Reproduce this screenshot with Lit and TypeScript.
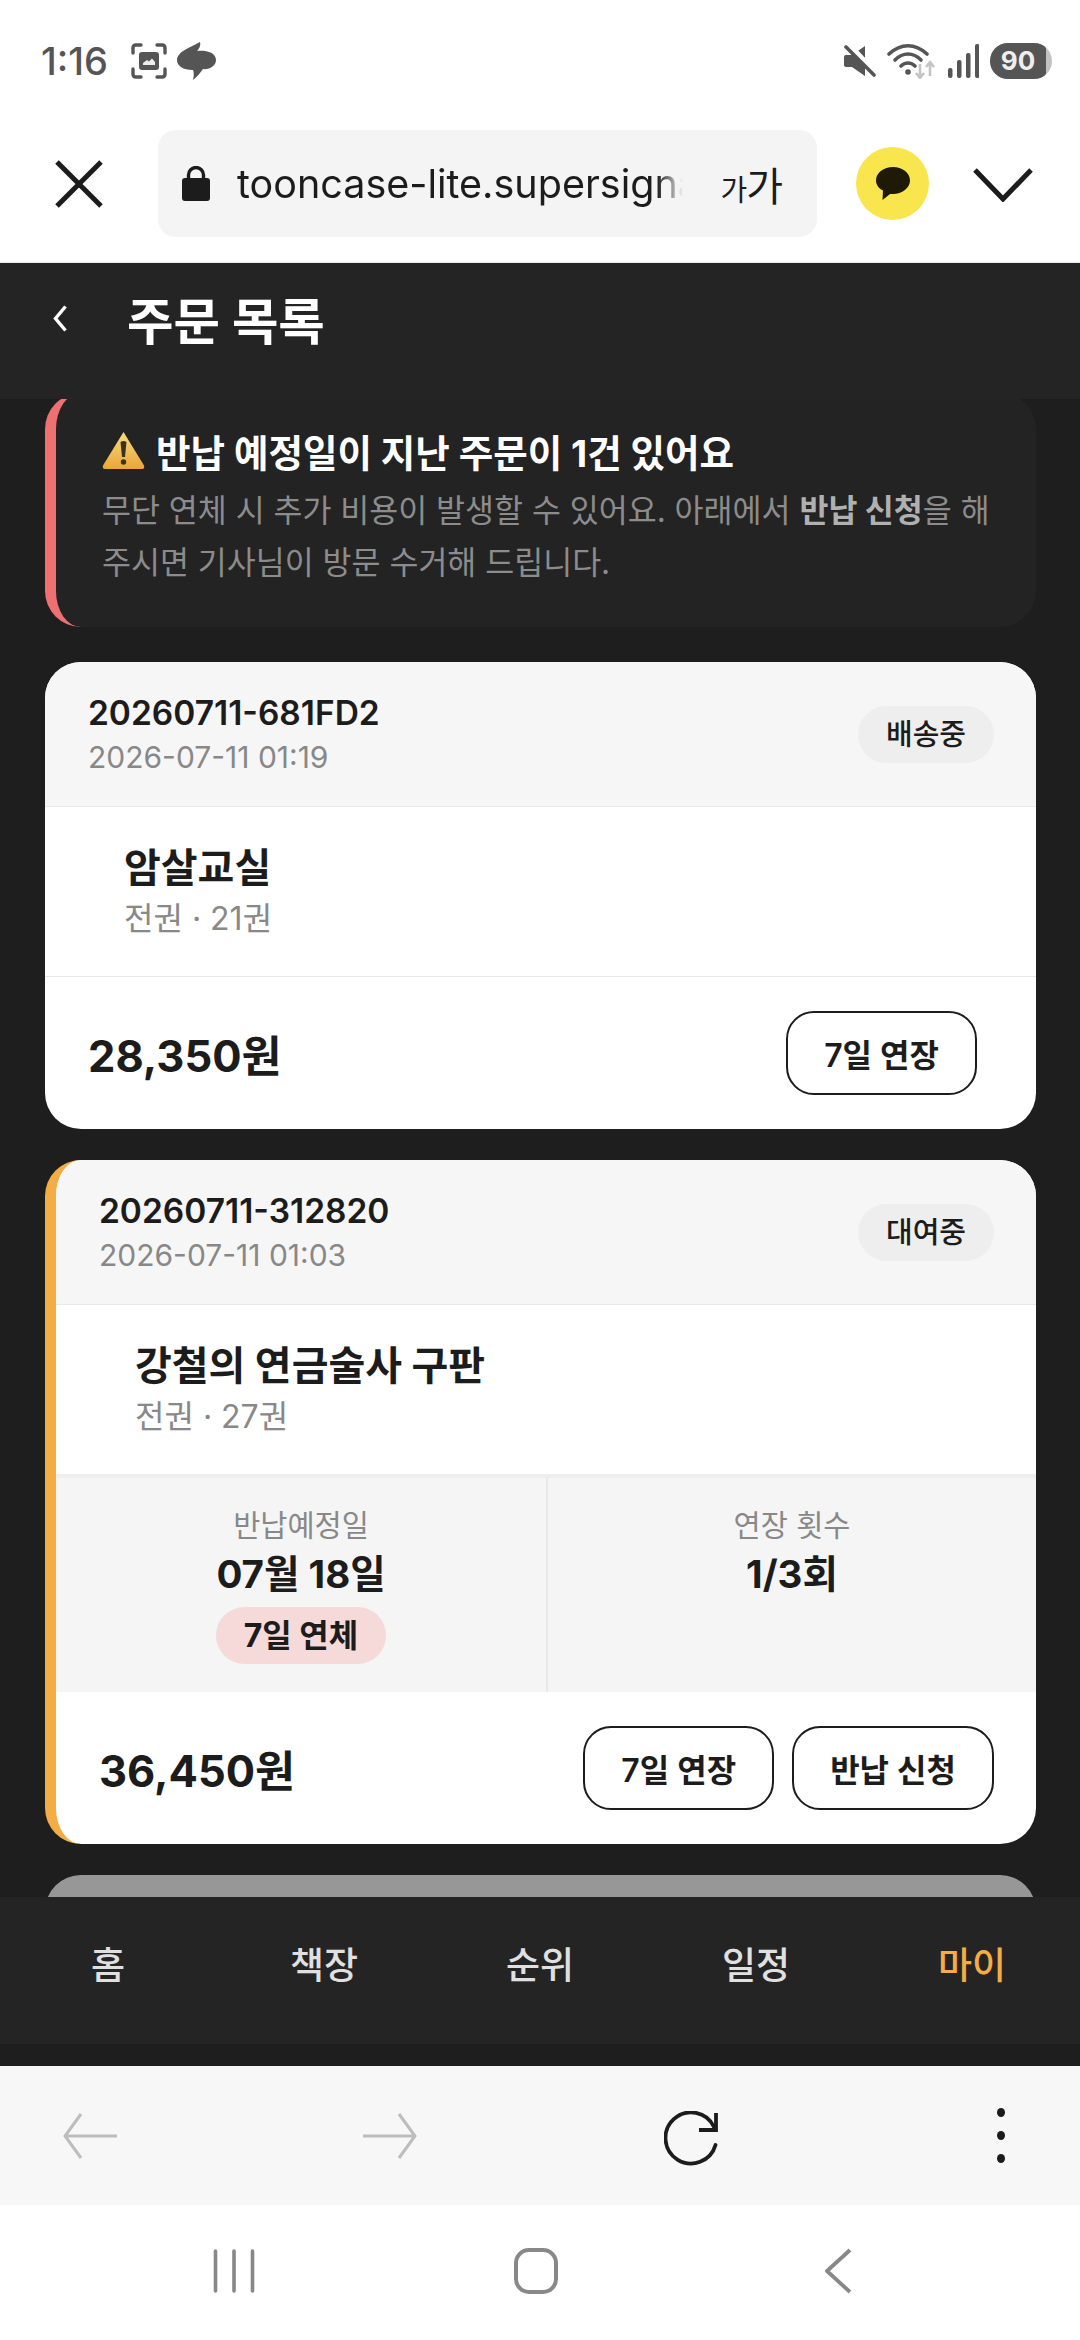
import { LitElement, css, html, svg } from 'lit'
import { customElement } from 'lit/decorators.js'

type Order = {
  id: string
  date: string
  status: string
  title: string
  sub: string
  price: string
  overdue?: boolean
  actions: string[]
}

const orders: Order[] = [
  {
    id: '20260711-681FD2',
    date: '2026-07-11 01:19',
    status: '배송중',
    title: '암살교실',
    sub: '전권 · 21권',
    price: '28,350원',
    actions: ['7일 연장'],
  },
  {
    id: '20260711-312820',
    date: '2026-07-11 01:03',
    status: '대여중',
    title: '강철의 연금술사 구판',
    sub: '전권 · 27권',
    price: '36,450원',
    overdue: true,
    actions: ['7일 연장', '반납 신청'],
  },
]

const tabs = ['홈', '책장', '순위', '일정', '마이']

const icon = (w: number, h: number, body: unknown) => html`<svg width=${w} height=${h} viewBox="0 0 ${w} ${h}" fill="none">${body}</svg>`

@customElement('app-root')
export class AppRoot extends LitElement {
  renderStatus() {
    return html`
      <div class="status">
        <span class="clock">1:16</span>
        <span class="capture">${icon(36, 36, svg`
          <path d="M2 10V5q0-3 3-3h5M26 2h5q3 0 3 3v5M34 26v5q0 3-3 3h-5M10 34H5q-3 0-3-3v-5" stroke="#555" stroke-width="3.400" stroke-linecap="round"/>
          <rect x="8" y="9" width="20" height="18" rx="3" fill="#555"/>
          <path d="M12 22v-2l4-3 2 1.500 3-3 3 3.500v3z" fill="#eee"/>`)}</span>
        <span class="blob">${icon(40, 38, svg`
          <path d="M23 0C24 4 22 7 20 9C28 8 39 10 39 18C39 24 32 28 26 27C23 31 20 35 16 38C17 34 17 30 16 28C6 28 0 24 0 18C0 10 12 6 23 0Z" fill="#555"/>`)}</span>
        <span class="grow"></span>
        <span class="mute">${icon(33, 32, svg`
          <path d="M0 12q0-2 2-2h6L21 1v30L8 22H2q-2 0-2-2z" fill="#555"/>
          <path d="M5 0l27 29" stroke="#fff" stroke-width="6"/>
          <path d="M2 2l28 28" stroke="#555" stroke-width="3.6" stroke-linecap="round"/>`)}</span>
        <span class="wifi">${icon(49, 36, svg`
          <path d="M2 11C14 0 28 0 40 11" stroke="#555" stroke-width="3.6" stroke-linecap="round"/>
          <path d="M8 17C16 9 26 9 34 17" stroke="#555" stroke-width="3.6" stroke-linecap="round"/>
          <path d="M14 23C18 19 24 19 28 23" stroke="#555" stroke-width="3.6" stroke-linecap="round"/>
          <circle cx="21" cy="29" r="2.8" fill="#555"/>
          <path d="M33 21v14M29 30l4 5 4-5M43 33V19M39 24l4-5 4 5" stroke="#c4c4c4" stroke-width="2.6"/>`)}</span>
        <span class="signal">${icon(31, 34, svg`
          <rect x="0" y="24" width="4.5" height="10" rx="2" fill="#555"/>
          <rect x="9" y="16" width="4.5" height="18" rx="2" fill="#555"/>
          <rect x="18" y="9" width="4.5" height="25" rx="2" fill="#555"/>
          <rect x="27" y="0" width="4.5" height="34" rx="2" fill="#555"/>`)}</span>
        <span class="battery"><span class="battery-level">90</span></span>
      </div>
    `
  }

  renderToolbar() {
    return html`
      <div class="toolbar">
        <span class="close">${icon(48, 48, svg`<path d="M2 2l44 44M46 2L2 46" stroke="#1c1c1c" stroke-width="5"/>`)}</span>
        <div class="url">
          <span class="lock">${icon(28, 35, svg`
            <path d="M6.5 14V9a7.5 7.5 0 0 1 15 0v5" stroke="#1c1c1c" stroke-width="3.4"/>
            <rect x="0" y="12" width="28" height="23" rx="3" fill="#1c1c1c"/>`)}</span>
          <span class="url-text">tooncase-lite.supersignal.app</span>
          <span class="font-size"><span class="small">가</span>가</span>
        </div>
        <span class="talk">${icon(34, 34, svg`
          <path d="M17 0C8 0 0 5.500 0 13.500C0 18 3 21.500 7 23.500L6.500 33L14 27C15 27 16 27 17 27C26 27 34 21 34 13.500C34 5.500 26 0 17 0Z" fill="#1f1a05"/>`)}</span>
        <span class="collapse">${icon(60, 34, svg`<path d="M2 2l28 29L58 2" stroke="#1c1c1c" stroke-width="5"/>`)}</span>
      </div>
    `
  }

  renderOrder(o: Order) {
    return html`
      <article class="card ${o.overdue ? 'overdue' : ''}">
        <header class="card-head">
          <div>
            <div class="order-id">${o.id}</div>
            <div class="order-date">${o.date}</div>
          </div>
          <span class="badge">${o.status}</span>
        </header>
        <div class="card-body">
          <div class="book">${o.title}</div>
          <div class="book-sub">${o.sub}</div>
        </div>
        ${o.overdue ? html`
          <div class="stats">
            <div class="stat">
              <div class="stat-label">반납예정일</div>
              <div class="stat-value">07월 18일</div>
              <span class="late">7일 연체</span>
            </div>
            <div class="stat">
              <div class="stat-label">연장 횟수</div>
              <div class="stat-value">1/3회</div>
            </div>
          </div>
        ` : ''}
        <footer class="card-foot">
          <span class="price">${o.price}</span>
          <div class="actions ${o.actions.length === 1 ? 'single' : ''}">
            ${o.actions.map((a) => html`<button>${a}</button>`)}
          </div>
        </footer>
      </article>
    `
  }

  render() {
    return html`
      ${this.renderStatus()}
      ${this.renderToolbar()}
      <div class="web">
        <div class="page-head">
          <span class="back">${icon(14, 27, svg`<path d="M12.500 1.500L2.500 13.500l10 12" stroke="#fff" stroke-width="3.400"/>`)}</span>
          <h1>주문 목록</h1>
        </div>
        <div class="scroll">
          <section class="alert">
            <div class="alert-title">
              <svg width="43" height="38" viewBox="0 0 43 38">
                <defs>
                  <linearGradient id="warn" x1="0" y1="0" x2="0" y2="1">
                    <stop offset="0" stop-color="#f6dc80"/>
                    <stop offset="1" stop-color="#e9a638"/>
                  </linearGradient>
                </defs>
                <path d="M21.500 1L42 34.500q.8 3.500-2 3.500H3q-2.800 0-2-3.500z" fill="url(#warn)"/>
                <path d="M18.500 11q3-2 6 0l-1.500 15h-3z" fill="#3c3220"/>
                <circle cx="21.500" cy="31" r="2.700" fill="#3c3220"/>
              </svg>
              <span>반납 예정일이 지난 주문이 1건 있어요</span>
            </div>
            <p>무단 연체 시 추가 비용이 발생할 수 있어요. 아래에서 <b>반납 신청</b>을 해주시면 기사님이 방문 수거해 드립니다.</p>
          </section>
          ${orders.map((o) => this.renderOrder(o))}
          <div class="card dimmed"></div>
        </div>
        <nav class="tabs">
          ${tabs.map((t, i) => html`<span class="tab ${i === 4 ? 'active' : ''}">${t}</span>`)}
        </nav>
      </div>
      <div class="browser-bar">
        <span>${icon(54, 46, svg`<path d="M18 1L2 23l16 22M2 23h52" stroke="#bdbdbd" stroke-width="3"/>`)}</span>
        <span>${icon(54, 46, svg`<path d="M36 1l16 22-16 22M52 23H0" stroke="#bdbdbd" stroke-width="3"/>`)}</span>
        <span class="reload">${icon(54, 56, svg`
          <path d="M51.500 34A25.500 25.500 0 1 1 50 16" stroke="#1c1c1c" stroke-width="3.800" stroke-linecap="round"/>
          <path d="M52 2v17H35" stroke="#1c1c1c" stroke-width="3.800"/>`)}</span>
        <span class="dots"><i></i><i></i><i></i></span>
      </div>
      <div class="nav-bar">
        <span>${icon(42, 44, svg`<path d="M2.500 2v40M21 2v40M39.500 2v40" stroke="#888" stroke-width="3.600" stroke-linecap="round"/>`)}</span>
        <span>${icon(44, 46, svg`<rect x="2" y="2" width="40" height="42" rx="13" stroke="#888" stroke-width="4"/>`)}</span>
        <span>${icon(28, 46, svg`<path d="M26 2L3 23l23 21" stroke="#888" stroke-width="3.800" stroke-linejoin="round"/>`)}</span>
      </div>
    `
  }

  static styles = css`
    :host {
      display: flex;
      flex-direction: column;
      width: 1080px;
      height: 2340px;
      overflow: hidden;
      background: #fff;
      color: #1c1c1c;
      font-family: Inter, 'Noto Sans CJK KR', sans-serif;
    }

    svg {
      display: block;
    }

    .status {
      flex: none;
      height: 130px;
      display: flex;
      align-items: center;
      padding: 0 28px 8px 41px;
      box-sizing: border-box;
    }
    .clock {
      font-size: 38px;
      font-weight: 500;
      color: #555;
      margin-right: 23px;
    }
    .capture {
      margin-right: 10px;
    }
    .grow {
      flex: 1;
    }
    .mute {
      margin-right: 10px;
    }
    .wifi {
      margin-right: 12px;
    }
    .signal {
      margin-right: 11px;
    }
    .battery {
      width: 62px;
      height: 36px;
      border-radius: 18px;
      background: #c2c2c2;
      overflow: hidden;
    }
    .battery-level {
      display: block;
      width: 56px;
      height: 36px;
      background: #555;
      border-radius: 16px 6px 6px 16px;
      color: #eee;
      font-size: 26px;
      font-weight: 700;
      line-height: 36px;
      text-align: center;
    }

    .toolbar {
      flex: none;
      height: 133px;
      display: flex;
      align-items: flex-start;
      padding-left: 55px;
      box-sizing: border-box;
      border-bottom: 1px solid #e8e8e8;
    }
    .close {
      margin-top: 30px;
      margin-right: 55px;
    }
    .url {
      width: 659px;
      height: 107px;
      border-radius: 18px;
      background: #f4f4f4;
      display: flex;
      align-items: center;
      padding: 0 35px 0 24px;
      box-sizing: border-box;
    }
    .lock {
      margin-right: 27px;
    }
    .url-text {
      width: 446px;
      overflow: hidden;
      white-space: nowrap;
      font-size: 39.5px;
      -webkit-mask-image: linear-gradient(90deg, #000 420px, transparent 446px);
      mask-image: linear-gradient(90deg, #000 420px, transparent 446px);
    }
    .font-size {
      margin-left: auto;
      font-size: 40px;
      letter-spacing: -1px;
      white-space: nowrap;
    }
    .small {
      font-size: 29px;
    }
    .talk {
      width: 73px;
      height: 73px;
      margin: 17px 44px 0 39px;
      border-radius: 50%;
      background: #f9e54e;
      display: flex;
      align-items: center;
      justify-content: center;
    }
    .collapse {
      margin-top: 38px;
    }

    .web {
      flex: 1;
      min-height: 0;
      display: flex;
      flex-direction: column;
      background: #1e1e1e;
    }
    .page-head {
      flex: none;
      height: 136px;
      background: #242424;
      display: flex;
      align-items: center;
      padding: 0 0 26px 53px;
      box-sizing: border-box;
    }
    .back {
      margin-right: 60px;
    }
    h1 {
      margin: 0;
      color: #fff;
      font-size: 50.5px;
      font-weight: 700;
    }

    .scroll {
      flex: 1;
      min-height: 0;
      overflow: hidden;
      display: flex;
      flex-direction: column;
      gap: 31px;
      padding: 0 44px 0 45px;
    }
    .alert {
      flex: none;
      margin-top: -6px;
      height: 234px;
      box-sizing: border-box;
      padding: 37px 30px 0 46px;
      border-left: 11px solid #ee7070;
      border-radius: 36px;
      background: #232323;
      margin-bottom: 4px;
    }
    .alert-title {
      display: flex;
      align-items: center;
      gap: 11px;
      color: #fff;
      font-size: 37.5px;
      font-weight: 700;
      height: 40px;
    }
    .alert p {
      margin: 15px 0 0;
      color: #8c8c8c;
      font-size: 31.5px;
      line-height: 52px;
    }
    .alert b {
      color: #b0b0b0;
      font-weight: 700;
    }

    .card {
      flex: none;
      border-radius: 36px;
      background: #fff;
      overflow: hidden;
    }
    .overdue {
      border-left: 11px solid #f4ad45;
    }
    .dimmed {
      height: 200px;
      background: #979797;
    }
    .card-head {
      height: 145px;
      box-sizing: border-box;
      background: #f6f6f6;
      border-bottom: 1px solid #e8e8e8;
      display: flex;
      align-items: center;
      justify-content: space-between;
      padding: 0 42px 0 43px;
    }
    .order-id {
      font-size: 33.5px;
      font-weight: 600;
      line-height: 44px;
      color: #1c1c1c;
    }
    .order-date {
      font-size: 30px;
      line-height: 40px;
      margin-top: 2px;
      color: #888;
    }
    .badge {
      height: 57px;
      padding: 0 28px;
      border-radius: 29px;
      background: #eee;
      font-size: 29px;
      font-weight: 500;
      line-height: 57px;
    }
    .card-body {
      height: 170px;
      box-sizing: border-box;
      padding: 33px 0 0 79px;
      border-bottom: 1px solid #e8e8e8;
    }
    .overdue .card-body {
      height: 173px;
      border-bottom: 4px solid #eee;
    }
    .book {
      font-size: 40px;
      font-weight: 700;
      line-height: 56px;
    }
    .book-sub {
      font-size: 32px;
      line-height: 46px;
      color: #888;
    }
    .stats {
      height: 214px;
      display: grid;
      grid-template-columns: 1fr 1fr;
      background: #f5f5f5;
    }
    .stat {
      display: flex;
      flex-direction: column;
      align-items: center;
      padding-top: 27px;
    }
    .stat + .stat {
      border-left: 2px solid #e8e8e8;
    }
    .stat-label {
      font-size: 29.5px;
      line-height: 40px;
      color: #888;
    }
    .stat-value {
      font-size: 38.5px;
      font-weight: 700;
      line-height: 50px;
      margin-top: 4px;
    }
    .late {
      margin-top: 8px;
      height: 57px;
      padding: 0 28px;
      border-radius: 29px;
      background: #f6d9d9;
      font-size: 32px;
      font-weight: 700;
      line-height: 57px;
    }
    .card-foot {
      height: 152px;
      display: flex;
      align-items: center;
      justify-content: space-between;
      padding: 0 42px 0 43px;
    }
    .price {
      font-size: 43.5px;
      font-weight: 700;
    }
    .actions {
      display: flex;
      gap: 18px;
    }
    .single {
      padding-right: 17px;
    }
    button {
      height: 84px;
      padding: 0 36px;
      border: 2px solid #1c1c1c;
      border-radius: 28px;
      background: #fff;
      color: #1c1c1c;
      font: 600 32px Inter, 'Noto Sans CJK KR', sans-serif;
    }

    .tabs {
      flex: none;
      height: 169px;
      box-sizing: border-box;
      background: linear-gradient(#242424 147px, #1e1e1e 147px);
      display: grid;
      grid-template-columns: repeat(5, 1fr);
      padding-top: 44px;
    }
    .tab {
      color: #e0e0e0;
      font-size: 37px;
      font-weight: 500;
      line-height: 50px;
      text-align: center;
    }
    .active {
      color: #f4ad45;
    }

    .browser-bar {
      flex: none;
      height: 139px;
      background: #f7f7f7;
      display: grid;
      grid-template-columns: 63px 54px 246px 54px 247px 54px 1fr;
      align-items: center;
    }
    .browser-bar span:nth-child(1) {
      grid-column: 2;
    }
    .browser-bar span:nth-child(2) {
      grid-column: 4;
    }
    .browser-bar span:nth-child(3) {
      grid-column: 6;
    }
    .reload {
      margin-top: 6px;
    }
    .dots {
      grid-column: 7;
      margin-left: 279px;
      width: 8px;
      display: flex;
      flex-direction: column;
      gap: 14px;
    }
    .dots i {
      width: 8px;
      height: 9px;
      border-radius: 50%;
      background: #1c1c1c;
    }

    .nav-bar {
      flex: none;
      height: 135px;
      box-sizing: border-box;
      display: grid;
      grid-template-columns: repeat(3, 302px);
      justify-items: center;
      align-items: center;
      padding: 0 0 4px 83px;
    }
  `
}

declare global {
  interface HTMLElementTagNameMap {
    'app-root': AppRoot
  }
}
